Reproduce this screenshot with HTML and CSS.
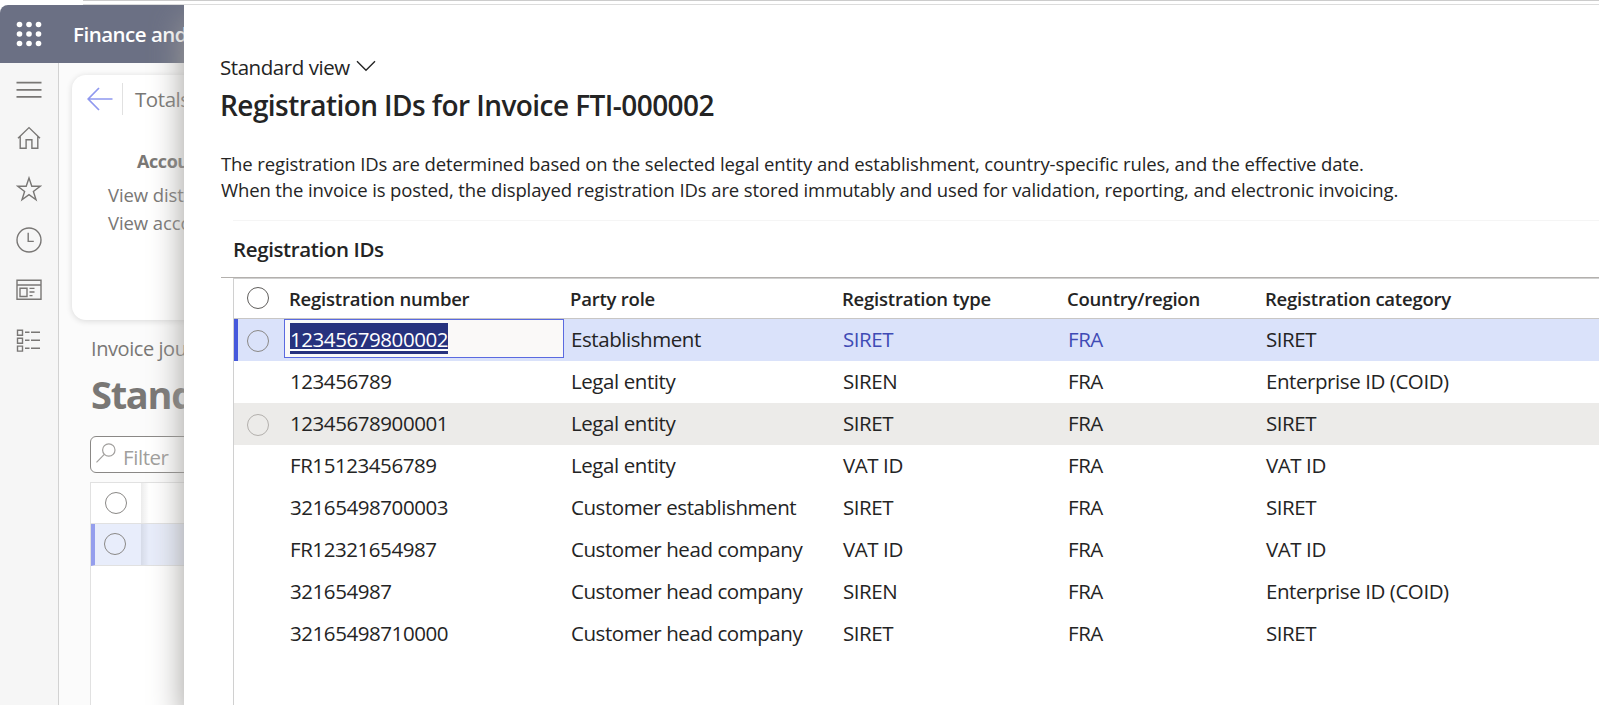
FILE: index.html
```html
<!DOCTYPE html>
<html lang="en">
<head>
    <meta charset="UTF-8">
    <title>Registration IDs | Finance and Operations</title>
    <link rel="stylesheet" href="styles.css">
</head>
<body>
    <div class="window-edge"></div>
    <div class="page">
        <div class="app">
            <div class="topbar">
                <svg class="waffle" width="26" height="26" viewBox="0 0 26 26">
                    <g fill="#ffffff">
                        <circle cx="3.5" cy="3.5" r="2.8"/><circle cx="13" cy="3.5" r="2.8"/><circle cx="22.5" cy="3.5" r="2.8"/>
                        <circle cx="3.5" cy="13" r="2.8"/><circle cx="13" cy="13" r="2.8"/><circle cx="22.5" cy="13" r="2.8"/>
                        <circle cx="3.5" cy="22.5" r="2.8"/><circle cx="13" cy="22.5" r="2.8"/><circle cx="22.5" cy="22.5" r="2.8"/>
                    </g>
                </svg>
                <span class="app-name">Finance and</span>
            </div>
            <div class="app-body">
                <div class="sidebar">
                    <svg width="26" height="26" viewBox="0 0 26 26"><path d="M.5 5.7h25M.5 12.8h25M.5 19.9h25" stroke-width="1.8"/></svg>
                    <svg class="home" width="26" height="26" viewBox="0 0 26 26"><path d="M2 13.2 13 2.6l11 10.6M4.2 11.4v11.8h5.9v-8.4h5.8v8.4h5.9V11.4"/></svg>
                    <svg width="26" height="26" viewBox="0 0 26 26"><path d="M13 2l2.8 8.3h8.4l-6.8 5.1 2.6 8.3-7-5.1-7 5.1 2.6-8.3-6.8-5.1h8.4z"/></svg>
                    <svg width="26" height="26" viewBox="0 0 26 26"><circle cx="13" cy="13" r="12"/><path d="M12.2 5.8v8.6h5.6"/></svg>
                    <svg width="26" height="26" viewBox="0 0 26 26"><path d="M1 3.3h24v19H1zM1 8h24M4 11.2h7v8.3H4zM13.5 11.4h5M13.5 15h5M13.5 18.6h3"/></svg>
                    <svg width="26" height="26" viewBox="0 0 26 26"><path d="M1.5 2.3h5v5h-5zM1.5 10.2h5v5h-5zM1.5 18.1h5v5h-5zM9 4.2h4.5M15 4.2h9M9 12.2h4.5M15 12.2h9M9 20.2h4.5M15 20.2h9"/></svg>
                </div>
                <div class="workspace">
                    <div class="card">
                        <div class="card-head">
                            <svg width="26" height="24" viewBox="0 0 26 24"><path d="M25.5 12H1.5M12 1 1.2 12 12 23"/></svg>
                            <span class="divider"></span>
                            <span>Totals</span>
                        </div>
                        <div class="card-title">Accounting</div>
                        <div class="card-link">View distributions</div>
                        <div class="card-link">View accounting</div>
                    </div>
                    <div class="form-caption">Invoice journal</div>
                    <div class="view-title">Standard</div>
                    <div class="filter">
                        <svg width="20" height="20" viewBox="0 0 20 20"><circle cx="12.8" cy="7" r="6.2"/><path d="M8.3 11.4.5 19.3"/></svg>
                        <span>Filter</span>
                    </div>
                    <div class="journal">
                        <div class="journal-row"><div class="mark"><span class="radio"></span></div><div class="shade"></div></div>
                        <div class="journal-row active"><div class="mark"><span class="radio"></span></div><div class="shade"></div></div>
                    </div>
                </div>
            </div>
        </div>

        <div class="panel">
            <div class="view-picker">
                <span>Standard view</span>
                <svg width="20" height="12" viewBox="0 0 20 12"><path d="M1 1.2l9 9 9-9"/></svg>
            </div>
            <h1>Registration IDs for Invoice FTI-000002</h1>
            <p class="info">
                The registration IDs are determined based on the selected legal entity and establishment, country-specific rules, and the effective date.<br>
                When the invoice is posted, the displayed registration IDs are stored immutably and used for validation, reporting, and electronic invoicing.
            </p>
            <div class="section">
                <h2>Registration IDs</h2>
            </div>
            <div class="grid-wrap">
                <table>
                    <colgroup>
                        <col class="c-mark"><col class="c-number"><col class="c-role"><col class="c-type"><col class="c-country"><col>
                    </colgroup>
                    <thead>
                        <tr>
                            <th><span class="radio"></span></th>
                            <th>Registration number</th>
                            <th>Party role</th>
                            <th>Registration type</th>
                            <th>Country/region</th>
                            <th>Registration category</th>
                        </tr>
                    </thead>
                    <tbody>
                        <tr class="selected">
                            <td><span class="radio"></span></td>
                            <td class="edit"><div class="input"><span class="highlight">12345679800002</span></div></td>
                            <td>Establishment</td>
                            <td class="link">SIRET</td>
                            <td class="link">FRA</td>
                            <td>SIRET</td>
                        </tr>
                        <tr>
                            <td></td>
                            <td>123456789</td>
                            <td>Legal entity</td>
                            <td>SIREN</td>
                            <td>FRA</td>
                            <td>Enterprise ID (COID)</td>
                        </tr>
                        <tr class="hovered">
                            <td><span class="radio"></span></td>
                            <td>12345678900001</td>
                            <td>Legal entity</td>
                            <td>SIRET</td>
                            <td>FRA</td>
                            <td>SIRET</td>
                        </tr>
                        <tr>
                            <td></td>
                            <td>FR15123456789</td>
                            <td>Legal entity</td>
                            <td>VAT ID</td>
                            <td>FRA</td>
                            <td>VAT ID</td>
                        </tr>
                        <tr>
                            <td></td>
                            <td>32165498700003</td>
                            <td>Customer establishment</td>
                            <td>SIRET</td>
                            <td>FRA</td>
                            <td>SIRET</td>
                        </tr>
                        <tr>
                            <td></td>
                            <td>FR12321654987</td>
                            <td>Customer head company</td>
                            <td>VAT ID</td>
                            <td>FRA</td>
                            <td>VAT ID</td>
                        </tr>
                        <tr>
                            <td></td>
                            <td>321654987</td>
                            <td>Customer head company</td>
                            <td>SIREN</td>
                            <td>FRA</td>
                            <td>Enterprise ID (COID)</td>
                        </tr>
                        <tr>
                            <td></td>
                            <td>32165498710000</td>
                            <td>Customer head company</td>
                            <td>SIRET</td>
                            <td>FRA</td>
                            <td>SIRET</td>
                        </tr>
                    </tbody>
                </table>
            </div>
        </div>
    </div>
</body>
</html>
```
FILE: styles.css
```css
* {
    box-sizing: border-box;
}

html, body {
    height: 100%;
    margin: 0;
    overflow: hidden;
}

body {
    display: flex;
    flex-direction: column;
    background-color: #ffffff;
    color: #242424;
    font-family: "Open Sans", "Noto Sans", sans-serif;
    font-size: 20.5px;
    letter-spacing: -0.43px;
    white-space: nowrap;
}

svg {
    display: block;
    flex: none;
    fill: none;
    stroke-width: 1.4;
}

.window-edge {
    flex: none;
    height: 5px;
    margin-left: 83px;
    border-top: 1px solid #cccccc;
    border-bottom: 1px solid #dcdcdc;
}

.page {
    flex: 1;
    display: flex;
    min-height: 0;
    overflow: hidden;
}

/* page behind the panel */
.app {
    flex: none;
    width: 184px;
    display: flex;
    flex-direction: column;
    overflow: hidden;
    border-top-left-radius: 8px;
    color: #797775;
}

.topbar {
    flex: none;
    height: 58px;
    display: flex;
    align-items: center;
    gap: 31px;
    padding-left: 16px;
    background-color: #6b7084;
    color: #ffffff;
    font-weight: 600;
}

.app-name {
    letter-spacing: -0.5px;
}

.app-body {
    flex: 1;
    display: flex;
    min-height: 0;
}

.sidebar {
    flex: none;
    width: 59px;
    display: flex;
    flex-direction: column;
    gap: 24.7px;
    padding: 14px 0 0 16px;
    background-color: #f6f6f6;
    border-right: 1px solid #d2d2d2;
}

.sidebar svg {
    stroke: #797775;
}

.sidebar .home {
    margin-top: -2.5px;
}

.workspace {
    flex: 1;
    min-width: 0;
    padding: 12px 0 0 13px;
    background-color: #fbfbfb;
}

.card {
    width: 300px;
    height: 245px;
    padding: 10px 0 0 15px;
    background-color: #ffffff;
    border-radius: 14px;
    box-shadow: 0 1px 6px rgba(0, 0, 0, 0.14);
}

.card-head {
    display: flex;
    align-items: center;
    height: 28px;
}

.card-head svg {
    stroke: #8f98ef;
    stroke-width: 1.7;
}

.divider {
    width: 1px;
    height: 32px;
    margin: 0 12px 0 9px;
    background-color: #e1e1e1;
}

.card-title {
    margin: 35px 0 7px 50px;
    font-size: 18px;
    line-height: 26px;
    font-weight: 700;
}

.card-link {
    margin-left: 21px;
    font-size: 18.5px;
    line-height: 28px;
    letter-spacing: -0.1px;
}

.form-caption {
    margin: 13px 0 0 19px;
    font-size: 20px;
    line-height: 32px;
}

.view-title {
    margin: 4px 0 0 19px;
    font-size: 38px;
    line-height: 50px;
    font-weight: 700;
    letter-spacing: -1.3px;
}

.filter {
    width: 300px;
    height: 37px;
    display: flex;
    align-items: center;
    gap: 7px;
    margin: 17px 0 0 18px;
    padding: 5px 0 0 5px;
    background-color: #ffffff;
    border: 1px solid #8a8886;
    border-radius: 6px;
    color: #a19f9d;
}

.filter svg {
    margin-bottom: 9px;
    stroke: #a19f9d;
    stroke-width: 1.2;
}

.journal {
    width: 300px;
    height: 300px;
    margin: 9px 0 0 18px;
    background-color: #ffffff;
    border: 1px solid #e1e1e1;
}

.journal-row {
    display: flex;
    height: 41px;
    border-bottom: 1px solid #e1e1e1;
}

.journal-row .mark {
    width: 50px;
    padding: 9px 0 0 14px;
}

.journal-row .shade {
    width: 8px;
    background: linear-gradient(to right, rgba(0, 0, 0, 0.08), rgba(0, 0, 0, 0));
}

.journal-row.active {
    height: 42px;
    background-color: #e8edfb;
    border-left: 4px solid #949eed;
}

.journal-row.active .mark {
    width: 46px;
    padding-left: 9px;
}

.radio {
    display: block;
    width: 22px;
    height: 22px;
    border: 1px solid #8a8886;
    border-radius: 50%;
}

/* slide-over panel */
.panel {
    flex: 1;
    min-width: 0;
    position: relative;
    display: flex;
    flex-direction: column;
    padding: 46px 0 0 37px;
    background-color: #ffffff;
    box-shadow: 0 16px 32px #9e9c99;
}

.view-picker {
    display: flex;
    align-items: center;
    gap: 6px;
    height: 32px;
    margin-left: -1px;
    letter-spacing: -0.45px;
}

.view-picker svg {
    margin-bottom: 2px;
    stroke: #242424;
}

h1 {
    margin: 0 0 0 -1px;
    font-size: 28px;
    line-height: 44px;
    font-weight: 600;
    letter-spacing: -0.56px;
}

.info {
    margin: 22px 0 0;
    padding-top: 2px;
    font-size: 18.5px;
    line-height: 26px;
    letter-spacing: -0.12px;
}

.section {
    flex: none;
    height: 57px;
    margin: 17px 0 0 12px;
    border-top: 1px solid #f5f5f5;
}

h2 {
    margin: 0;
    line-height: 57px;
    font-size: 20.5px;
    font-weight: 600;
    letter-spacing: -0.38px;
}

.grid-wrap {
    flex: 1;
    display: flex;
    min-height: 0;
    padding-left: 12px;
    border-top: 1px solid #b3b0ad;
}

.grid-wrap::before {
    content: "";
    flex: none;
    width: 1px;
    background-color: #d0d0d0;
}

.grid-wrap table {
    align-self: flex-start;
    width: 100%;
    table-layout: fixed;
    border-collapse: separate;
    border-spacing: 0;
}

.c-mark { width: 50px; }
.c-number { width: 281px; }
.c-role { width: 272px; }
.c-type { width: 225px; }
.c-country { width: 198px; }

th {
    height: 41px;
    padding: 0 0 1px 5px;
    border-top: 1px solid #d0d0d0;
    border-bottom: 1px solid #c8c6c4;
    font-size: 18.5px;
    font-weight: 600;
    text-align: left;
    letter-spacing: -0.22px;
}

td {
    height: 42px;
    padding: 0 0 3px 6px;
}

th:first-child {
    padding: 0 0 2px 13px;
}

td:first-child {
    padding: 1px 0 0 13px;
}

th .radio {
    border-color: #605e5c;
}

.selected {
    background-color: #dae2fa;
}

.selected td:first-child {
    padding-left: 9px;
    border-left: 4px solid #4659dc;
}

.hovered {
    background-color: #ecebe9;
}

.hovered .radio {
    border-color: #b3b0ad;
}

.link {
    color: #3f4bb5;
}

td.edit {
    padding: 0;
    vertical-align: top;
}

.input {
    display: flex;
    align-items: flex-start;
    width: 280px;
    height: 39px;
    padding: 3px 0 0 5px;
    background-color: #faf9f8;
    border: 1px solid #5a6ae0;
}

.highlight {
    height: 31px;
    line-height: 32px;
    background: linear-gradient(to bottom, #27327e 26px, #ffffff 26px, #ffffff 28px, #27327e 28px);
    color: #ffffff;
}
```
